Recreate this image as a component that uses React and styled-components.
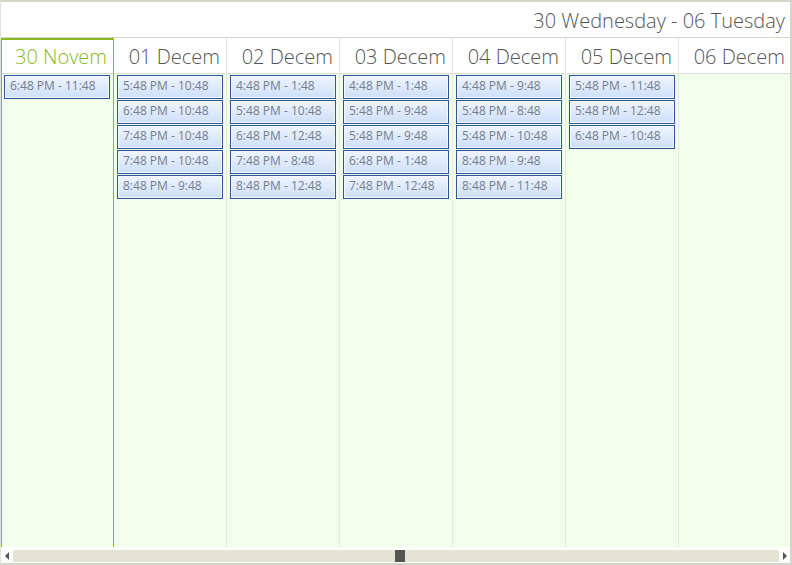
import React from "react";
import styled, { createGlobalStyle } from "styled-components";

const Global = createGlobalStyle`
  html, body { margin: 0; padding: 0; background: #fff; }
  * { box-sizing: border-box; }
`;

const Frame = styled.div`
  width: 792px;
  height: 565px;
  border-top: 2px solid #d4d4c8;
  border-right: 2px solid #d4d4c8;
  border-bottom: 2px solid #d4d4c8;
  border-left: 1px solid #e2e2dc;
  display: flex;
  flex-direction: column;
  font-family: "Open Sans", "Noto Sans", sans-serif;
  background: #fff;
  overflow: hidden;
`;

const RangeBar = styled.div`
  height: 36px;
  flex: none;
  border-bottom: 1px solid #d6d6cc;
  display: flex;
  align-items: center;
  justify-content: flex-end;
  padding-right: 5px;
  padding-top: 1px;
  font-size: 20px;
  font-weight: 300;
  color: #555;
  white-space: nowrap;
`;

const Columns = styled.div`
  flex: 1;
  display: grid;
  grid-template-columns: 114px repeat(6, 113px);
  margin-left: -1px;
  min-height: 0;
`;

const Column = styled.div`
  display: flex;
  flex-direction: column;
  border-right: 1px solid ${(p) => (p.$active ? "#8ab81f" : "#e6e8e0")};
  border-left: ${(p) => (p.$active ? "2px solid #8ab81f" : "none")};
  min-width: 0;
`;

const DayHead = styled.div`
  height: 36px;
  flex: none;
  border-top: 2px solid ${(p) => (p.$active ? "#8ab81f" : "#fff")};
  border-bottom: 1px solid #dcdcd4;
  display: flex;
  align-items: center;
  justify-content: flex-end;
  padding-right: 6px;
  font-size: 20px;
  font-weight: 300;
  color: ${(p) => (p.$active ? "#8ab81f" : "#555")};
  white-space: nowrap;
  overflow: hidden;
  background: #fff;
`;

const DayBody = styled.div`
  flex: 1;
  background: #f2fdea;
  padding: 1px 3px 0 ${(p) => (p.$active ? "2px" : "3px")};
  display: flex;
  flex-direction: column;
  gap: 1px;
`;

const Appt = styled.div`
  height: 24px;
  border: 1px solid #2b579a;
  box-shadow: inset 0 0 0 1px #f4f8fe;
  background: linear-gradient(to bottom, #eef4fd 0%, #dde9fb 55%, #cddff8 100%);
  font-family: "Open Sans", "Noto Sans", sans-serif;
  font-size: 12px;
  color: #737d8c;
  display: flex;
  align-items: center;
  padding-left: 5px;
  padding-bottom: 3px;
  white-space: nowrap;
  overflow: hidden;
`;

const Scroll = styled.div`
  height: 16px;
  flex: none;
  display: flex;
  align-items: center;
  padding: 2px 3px 1px 4px;
  gap: 4px;
  background: #fff;
`;

const Arrow = styled.div`
  width: 0;
  height: 0;
  border-top: 4px solid transparent;
  border-bottom: 4px solid transparent;
  ${(p) =>
    p.$dir === "left"
      ? "border-right: 4px solid #555;"
      : "border-left: 4px solid #555;"}
  flex: none;
`;

const Track = styled.div`
  flex: 1;
  height: 12px;
  background: #e4e4d4;
  position: relative;
`;

const Thumb = styled.div`
  position: absolute;
  top: 0;
  left: 382px;
  width: 10px;
  height: 12px;
  background: #555552;
`;

const days = [
  { label: "30 Novem", active: true, items: ["6:48 PM - 11:48"] },
  {
    label: "01 Decem",
    items: ["5:48 PM - 10:48", "6:48 PM - 10:48", "7:48 PM - 10:48", "7:48 PM - 10:48", "8:48 PM - 9:48"],
  },
  {
    label: "02 Decem",
    items: ["4:48 PM - 1:48", "5:48 PM - 10:48", "6:48 PM - 12:48", "7:48 PM - 8:48", "8:48 PM - 12:48"],
  },
  {
    label: "03 Decem",
    items: ["4:48 PM - 1:48", "5:48 PM - 9:48", "5:48 PM - 9:48", "6:48 PM - 1:48", "7:48 PM - 12:48"],
  },
  {
    label: "04 Decem",
    items: ["4:48 PM - 9:48", "5:48 PM - 8:48", "5:48 PM - 10:48", "8:48 PM - 9:48", "8:48 PM - 11:48"],
  },
  { label: "05 Decem", items: ["5:48 PM - 11:48", "5:48 PM - 12:48", "6:48 PM - 10:48"] },
  { label: "06 Decem", items: [] },
];

export default function App() {
  return (
    <>
      <Global />
      <Frame>
        <RangeBar>30 Wednesday - 06 Tuesday</RangeBar>
        <Columns>
          {days.map((d) => (
            <Column key={d.label} $active={d.active}>
              <DayHead $active={d.active}>{d.label}</DayHead>
              <DayBody $active={d.active}>
                {d.items.map((t, i) => (
                  <Appt key={i}>{t}</Appt>
                ))}
              </DayBody>
            </Column>
          ))}
        </Columns>
        <Scroll>
          <Arrow $dir="left" />
          <Track>
            <Thumb />
          </Track>
          <Arrow $dir="right" />
        </Scroll>
      </Frame>
    </>
  );
}
